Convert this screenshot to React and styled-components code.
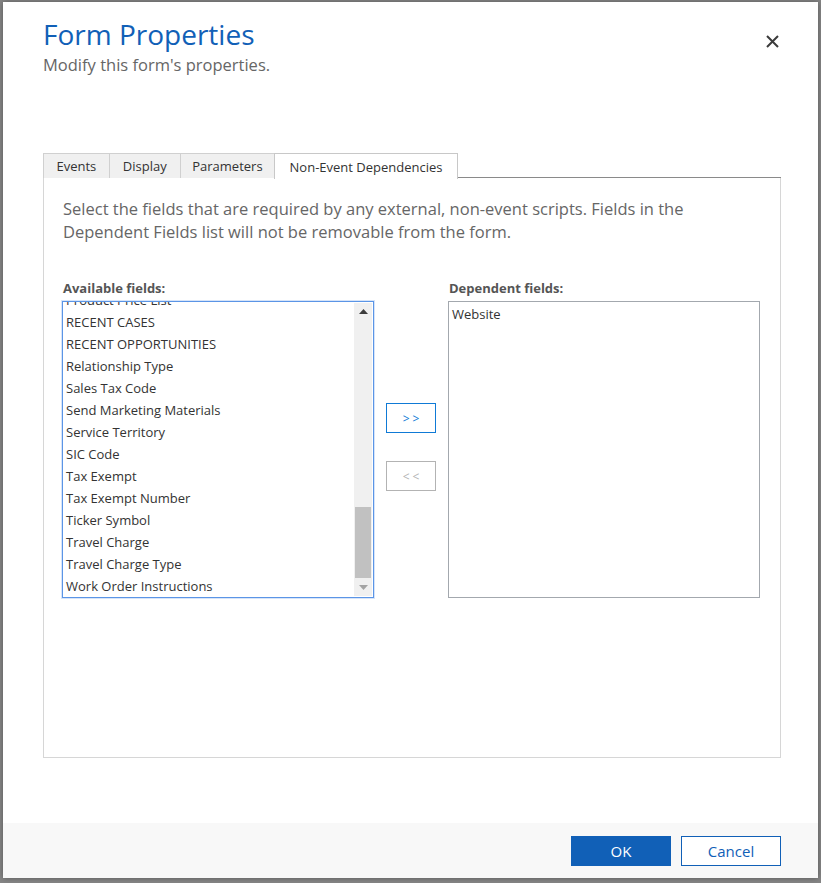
import React from "react";
import styled, { createGlobalStyle } from "styled-components";

const GlobalStyle = createGlobalStyle`
  html, body {
    margin: 0;
    padding: 0;
    background: #868686;
  }
  * {
    box-sizing: border-box;
  }
`

const font = `"Open Sans", "Noto Sans", sans-serif`

const Backdrop = styled.div`
  width: 821px;
  height: 883px;
  padding: 2px 3px 5px 3px;
  background: #868686;
  font-family: ${font};
`

const Dialog = styled.div`
  width: 815px;
  height: 876px;
  background: #fff;
  display: flex;
  flex-direction: column;
  box-shadow: 0 0 6px rgba(0, 0, 0, 0.35);
`

const Header = styled.div`
  display: flex;
  justify-content: space-between;
  padding: 13px 40px 0 40px;
  height: 151px;
`

const Titles = styled.div`
  display: flex;
  flex-direction: column;
`

const Title = styled.h1`
  margin: 0;
  font-size: 28px;
  line-height: 38px;
  font-weight: 400;
  color: #1160b7;
`

const Subtitle = styled.div`
  font-size: 16.5px;
  line-height: 23px;
  color: #666;
`

const CloseButton = styled.button`
  border: none;
  background: none;
  padding: 0;
  margin-top: 18px;
  margin-right: -2px;
  width: 16px;
  height: 16px;
  display: flex;
  align-items: center;
  justify-content: center;
  cursor: pointer;
`

const Content = styled.div`
  flex: 1;
  padding: 0 37px 0 40px;
`

const TabRow = styled.div`
  display: flex;
  height: 25px;
  border-bottom: 1px solid #8a8a8a;
`

const Tab = styled.div`
  height: ${p => (p.active ? "26px" : "25px")};
  padding: 0 ${p => p.pad}px;
  display: flex;
  align-items: center;
  font-size: 13px;
  color: #333;
  background: ${p => (p.active ? "#fff" : "#f0f0f0")};
  border: 1px solid ${p => (p.active ? "#c8c8c8" : "#d0d0d0")};
  border-bottom: none;
  margin-left: -1px;
  &:first-child {
    margin-left: 0;
  }
`

const Panel = styled.div`
  height: 580px;
  border: 1px solid #d6d6d6;
  border-top: none;
  padding: 19px 20px 0 18px;
`

const Description = styled.p`
  margin: 0;
  font-size: 16.5px;
  line-height: 23px;
  color: #666;
  max-width: 680px;
  padding-left: 1px;
`

const Columns = styled.div`
  display: flex;
  margin-top: 36px;
  gap: 12px;
`

const Column = styled.div`
  display: flex;
  flex-direction: column;
`

const Label = styled.div`
  font-size: 13px;
  line-height: 18px;
  font-weight: 700;
  color: #555;
  margin-bottom: 4px;
  padding-left: 1px;
`

const ListBox = styled.div`
  width: 312px;
  height: 297px;
  border: 1px solid ${p => (p.focused ? "#5b95e6" : "#a3a8ae")};
  box-shadow: ${p => (p.focused ? "0 0 0 1px rgba(91,149,230,0.25)" : "none")};
  display: flex;
  overflow: hidden;
  background: #fff;
`

const Items = styled.div`
  flex: 1;
  overflow: hidden;
`

const ItemsInner = styled.div`
  margin-top: ${p => p.offset}px;
`

const Item = styled.div`
  font-size: 13px;
  line-height: 22px;
  height: 22px;
  padding-left: 3px;
  color: #333;
  white-space: nowrap;
`

const ScrollBar = styled.div`
  width: 18px;
  margin: 1px 1px 1px 0;
  background: #f0f0f0;
  display: flex;
  flex-direction: column;
`

const ScrollArrow = styled.div`
  height: 17px;
  display: flex;
  align-items: center;
  justify-content: center;
`

const ScrollTrack = styled.div`
  flex: 1;
  display: flex;
  flex-direction: column;
  justify-content: flex-end;
  padding: 0 1px 1px 1px;
`

const ScrollThumb = styled.div`
  height: 71px;
  background: #c1c1c1;
`

const MoveButtons = styled.div`
  width: 50px;
  display: flex;
  flex-direction: column;
  gap: 28px;
  padding-top: 124px;
`

const MoveButton = styled.button`
  width: 50px;
  height: 30px;
  background: #fff;
  border: 1px solid ${p => (p.disabled ? "#b3b3b3" : "#0f7ad6")};
  color: ${p => (p.disabled ? "#b3b3b3" : "#0f7ad6")};
  font-family: ${font};
  font-size: 12px;
  letter-spacing: 3px;
  padding: 0 0 0 3px;
  cursor: ${p => (p.disabled ? "default" : "pointer")};
`

const Footer = styled.div`
  height: 55px;
  background: #f8f8f8;
  display: flex;
  justify-content: flex-end;
  align-items: flex-start;
  gap: 10px;
  padding: 13px 37px 0 0;
`

const FooterButton = styled.button`
  width: 100px;
  height: 30px;
  font-family: ${font};
  font-size: 15px;
  border: 1px solid #1160b7;
  background: ${p => (p.primary ? "#1160b7" : "#fff")};
  color: ${p => (p.primary ? "#fff" : "#1160b7")};
  cursor: pointer;
`

const tabs = [
  { name: "Events", pad: 12.5 },
  { name: "Display", pad: 13 },
  { name: "Parameters", pad: 11.5 },
  { name: "Non-Event Dependencies", pad: 14.5, active: true },
]

const available = [
  "Product Price List",
  "RECENT CASES",
  "RECENT OPPORTUNITIES",
  "Relationship Type",
  "Sales Tax Code",
  "Send Marketing Materials",
  "Service Territory",
  "SIC Code",
  "Tax Exempt",
  "Tax Exempt Number",
  "Ticker Symbol",
  "Travel Charge",
  "Travel Charge Type",
  "Work Order Instructions",
]

const dependent = ["Website"]

const Triangle = ({ up }) => (
  <svg width="9" height="5" viewBox="0 0 9 5">
    <path d={up ? "M0 5 L4.5 0 L9 5 Z" : "M0 0 L4.5 5 L9 0 Z"} fill={up ? "#3c3c3c" : "#a3a3a3"} />
  </svg>
)

const App = () => {
  return (
    <>
      <GlobalStyle />
      <Backdrop>
        <Dialog>
          <Header>
            <Titles>
              <Title>Form Properties</Title>
              <Subtitle>Modify this form's properties.</Subtitle>
            </Titles>
            <CloseButton aria-label="Close">
              <svg width="13" height="13" viewBox="0 0 13 13">
                <path d="M1 1 L12 12 M12 1 L1 12" stroke="#3b3b3b" strokeWidth="2" />
              </svg>
            </CloseButton>
          </Header>
          <Content>
            <TabRow>
              {tabs.map(t => (
                <Tab key={t.name} active={t.active} pad={t.pad}>{t.name}</Tab>
              ))}
            </TabRow>
            <Panel>
              <Description>
                Select the fields that are required by any external, non-event scripts. Fields in the
                Dependent Fields list will not be removable from the form.
              </Description>
              <Columns>
                <Column>
                  <Label>Available fields:</Label>
                  <ListBox focused>
                    <Items>
                      <ItemsInner offset={-13}>
                        {available.map(a => <Item key={a}>{a}</Item>)}
                      </ItemsInner>
                    </Items>
                    <ScrollBar>
                      <ScrollArrow><Triangle up /></ScrollArrow>
                      <ScrollTrack><ScrollThumb /></ScrollTrack>
                      <ScrollArrow><Triangle /></ScrollArrow>
                    </ScrollBar>
                  </ListBox>
                </Column>
                <MoveButtons>
                  <MoveButton>&gt;&gt;</MoveButton>
                  <MoveButton disabled>&lt;&lt;</MoveButton>
                </MoveButtons>
                <Column>
                  <Label>Dependent fields:</Label>
                  <ListBox>
                    <Items>
                      <ItemsInner offset={1}>
                        {dependent.map(d => <Item key={d}>{d}</Item>)}
                      </ItemsInner>
                    </Items>
                  </ListBox>
                </Column>
              </Columns>
            </Panel>
          </Content>
          <Footer>
            <FooterButton primary>OK</FooterButton>
            <FooterButton>Cancel</FooterButton>
          </Footer>
        </Dialog>
      </Backdrop>
    </>
  );
};

export default App;
